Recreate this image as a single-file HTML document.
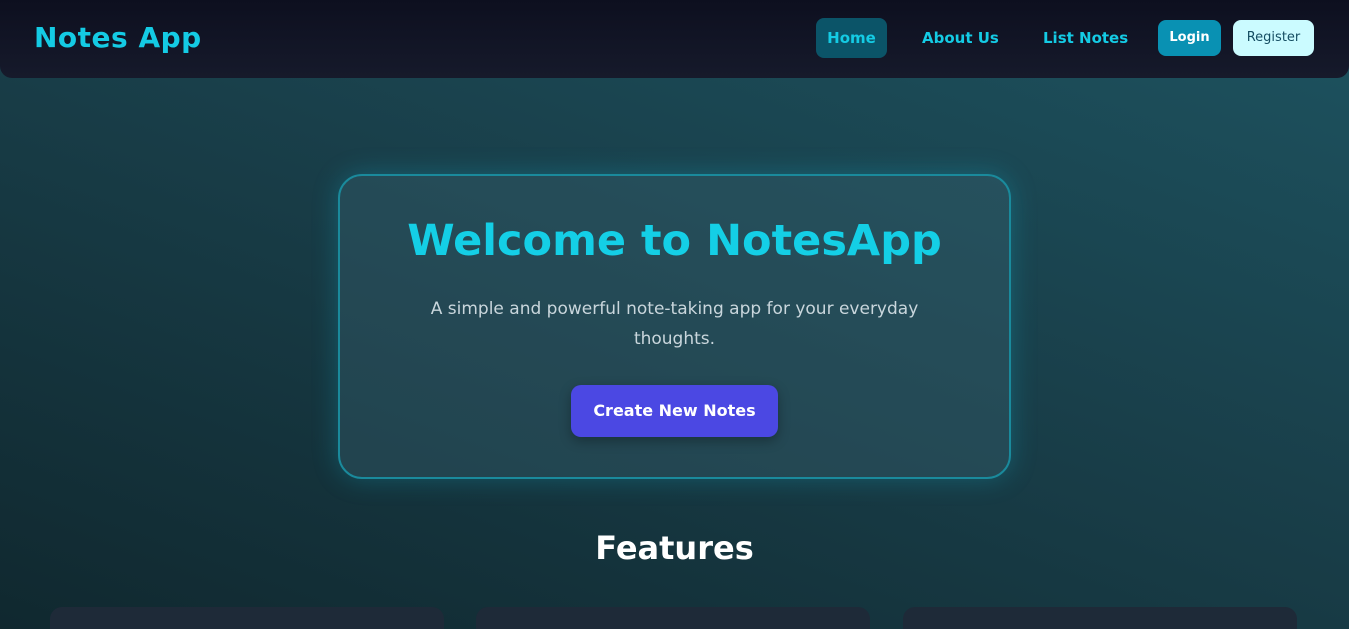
<!DOCTYPE html>
<html style="overflow:hidden;width:1349px;height:629px"><head><style>
*{box-sizing:border-box;margin:0;padding:0}
body{width:1349px;height:629px;overflow:hidden;font-family:"DejaVu Sans","Liberation Sans",sans-serif;
background:linear-gradient(200deg,#1d5360 0%,#193f4a 45%,#10282f 100%);position:relative}
nav{position:absolute;left:0;top:0;width:1349px;height:78px;background:linear-gradient(180deg,#0d0f1f,#161a2b);border-radius:0 0 12px 12px}
.logo{position:absolute;left:34px;top:21px;font-size:28px;font-weight:bold;color:#14cbe4;letter-spacing:0.5px}
.nl{position:absolute;top:18px;height:40px;line-height:40px;font-size:15px;font-weight:bold;color:#14cbe4}
.btn{position:absolute;top:20px;height:36px;line-height:36px;font-size:13px;font-weight:bold;border-radius:8px;text-align:center}
.hero{position:absolute;left:338px;top:174px;width:673px;height:305px;border:2px solid #1a8a9c;border-radius:24px;
background:rgba(60,100,115,0.35);box-shadow:0 0 26px rgba(20,200,230,0.25);text-align:center}
h1{margin-top:40px;font-size:43px;color:#14cfe6;font-weight:bold}
p{margin:28px auto 0;width:520px;font-size:17px;line-height:30px;color:#c9d6dc}
.cta{display:inline-block;margin-top:31px;width:207px;height:52px;line-height:52px;background:#4b48e3;color:#fff;border-radius:10px;font-weight:bold;font-size:16px;box-shadow:0 4px 12px rgba(0,0,0,.3)}
h2{position:absolute;top:529px;width:100%;text-align:center;font-size:32px;color:#fff;font-weight:bold}
.card{position:absolute;top:607px;width:394px;height:22px;background:#1e2a38;border-radius:12px 12px 0 0}
</style></head><body>
<nav>
<div class="logo">Notes App</div>
<div class="nl" style="left:816px;width:71px;background:#0b5468;border-radius:8px;text-align:center">Home</div>
<div class="nl" style="left:922px">About Us</div>
<div class="nl" style="left:1043px">List Notes</div>
<div class="btn" style="left:1158px;width:63px;background:#0991b3;color:#fff">Login</div>
<div class="btn" style="left:1233px;width:81px;background:#cbfbff;color:#164e63;font-weight:normal">Register</div>
</nav>
<div class="hero">
<h1>Welcome to NotesApp</h1>
<p>A simple and powerful note-taking app for your everyday thoughts.</p>
<div class="cta">Create New Notes</div>
</div>
<h2>Features</h2>
<div class="card" style="left:50px"></div>
<div class="card" style="left:476px"></div>
<div class="card" style="left:903px"></div>
</body></html>
